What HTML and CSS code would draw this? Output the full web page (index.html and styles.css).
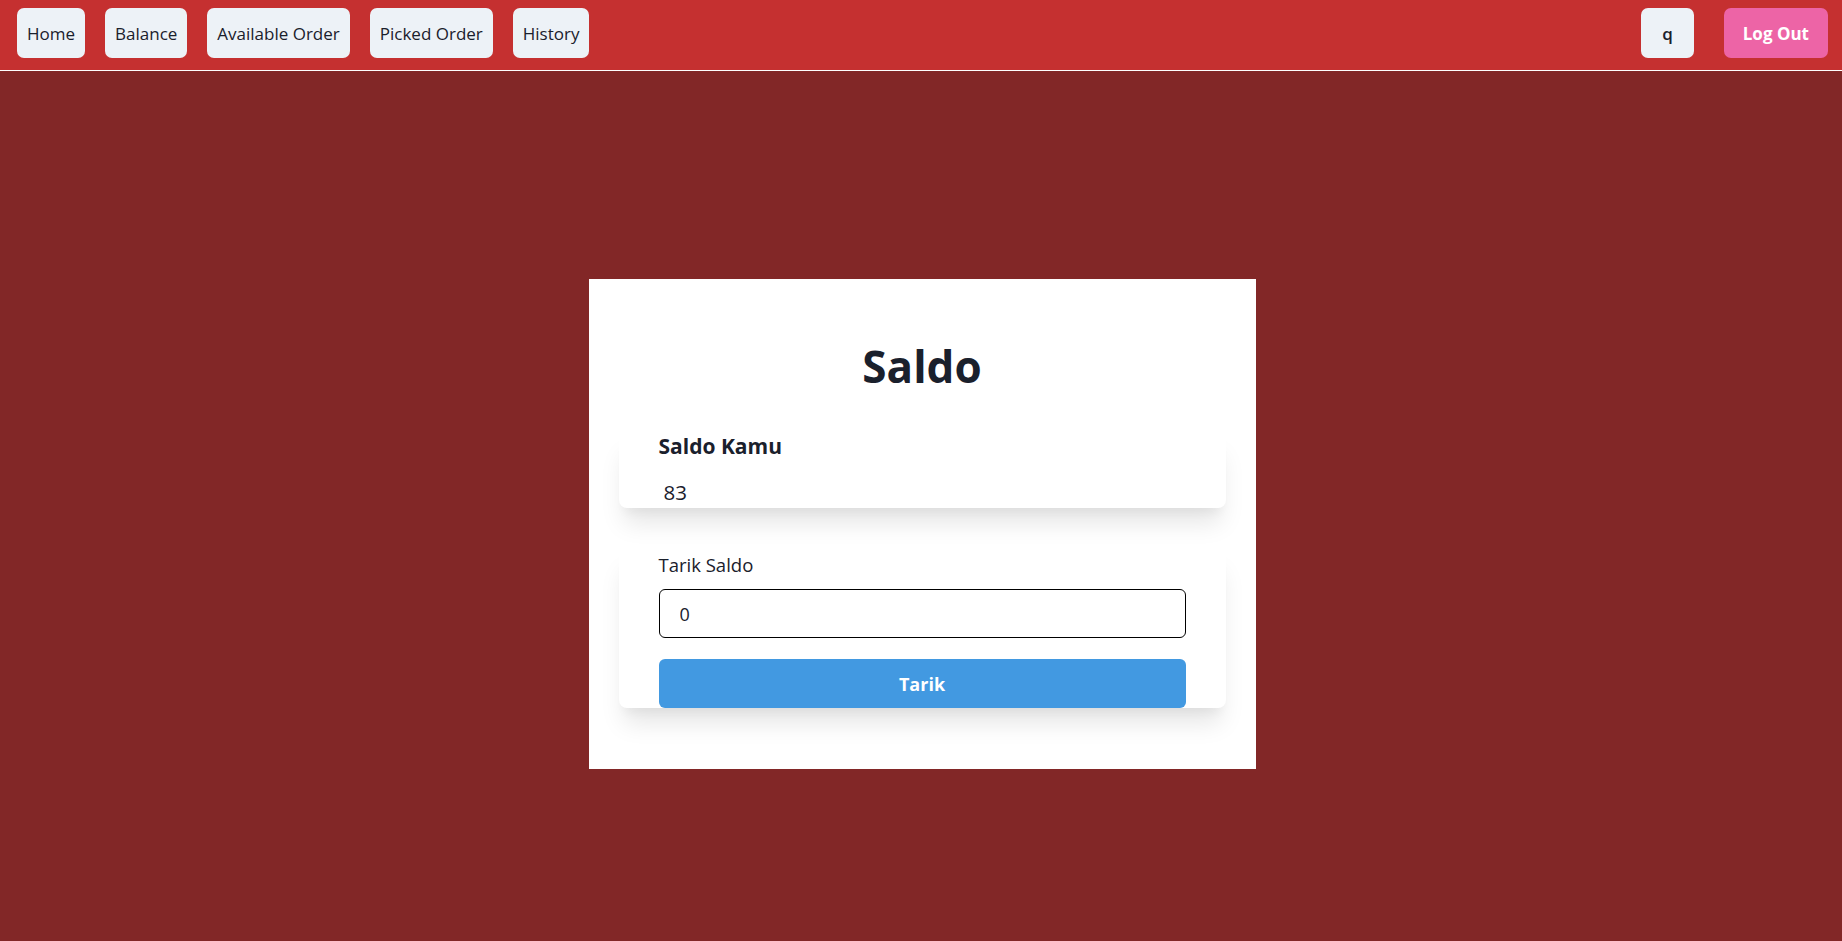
FILE: index.html
```html
<!DOCTYPE html>
<html lang="id">
<head>
<meta charset="utf-8">
<title>Saldo</title>
<link rel="stylesheet" href="styles.css">
</head>
<body>
<nav class="navbar">
  <div class="nav-left">
    <a class="nav-btn" href="#">Home</a>
    <a class="nav-btn" href="#">Balance</a>
    <a class="nav-btn" href="#">Available Order</a>
    <a class="nav-btn" href="#">Picked Order</a>
    <a class="nav-btn" href="#">History</a>
  </div>
  <div class="nav-right">
    <span class="nav-btn user-btn">q</span>
    <a class="logout-btn" href="#">Log Out</a>
  </div>
</nav>
<main class="page">
  <section class="saldo-card">
    <h1 class="title">Saldo</h1>
    <div class="panel balance-panel">
      <h3 class="panel-heading">Saldo Kamu</h3>
      <p class="balance-value">83</p>
    </div>
    <form class="panel withdraw-panel">
      <label class="field-label" for="tarik">Tarik Saldo</label>
      <input class="field-input" id="tarik" type="number" value="0">
      <button class="submit-btn" type="button">Tarik</button>
    </form>
  </section>
</main>
</body>
</html>
```

FILE: styles.css
```css
* {
  box-sizing: border-box;
}

html, body {
  margin: 0;
  padding: 0;
}

body {
  min-height: 941px;
  background: #822727;
  color: #1a202c;
  font-family: "Segoe UI", "Open Sans", "Noto Sans", sans-serif;
}

.navbar {
  height: 71px;
  background: #c53030;
  border-bottom: 1px solid #ffffff;
  display: flex;
  justify-content: space-between;
  align-items: flex-start;
  padding: 8px 14px 0 17px;
}

.nav-left {
  display: flex;
  gap: 20px;
}

.nav-right {
  display: flex;
  gap: 30px;
}

.nav-btn {
  height: 50px;
  display: flex;
  align-items: center;
  justify-content: center;
  padding: 0 10px;
  background: #edf2f7;
  border-radius: 7px;
  color: #1a202c;
  text-decoration: none;
  font-size: 17px;
  font-weight: 500;
}

.user-btn {
  padding: 0 21px;
  font-weight: 600;
}

.logout-btn {
  height: 50px;
  display: flex;
  align-items: center;
  padding: 0 19px;
  background: #ed64a6;
  border-radius: 7px;
  color: #ffffff;
  text-decoration: none;
  font-size: 17px;
  font-weight: 700;
}

.page {
  display: flex;
  justify-content: center;
  padding-top: 208px;
  padding-left: 2px;
}

.saldo-card {
  width: 667px;
  height: 490px;
  background: #ffffff;
  padding: 51px 30px 0;
}

.title {
  margin: 0 0 29px;
  text-align: center;
  font-size: 44px;
  line-height: 72px;
  font-weight: 700;
  color: #1a202c;
}

.panel {
  background: #ffffff;
  border-radius: 8px;
  padding: 0 40px;
  box-shadow: 0 20px 25px -5px rgba(0, 0, 0, 0.1), 0 10px 10px -5px rgba(0, 0, 0, 0.04);
}

.balance-panel {
  height: 77px;
  margin-bottom: 39px;
}

.panel-heading {
  margin: 0;
  font-size: 21px;
  line-height: 30px;
  font-weight: 700;
}

.balance-value {
  margin: 17px 0 0;
  padding-left: 5px;
  font-size: 20.5px;
  line-height: 28px;
}

.withdraw-panel {
  height: 161px;
  display: flex;
  flex-direction: column;
  padding-top: 4px;
  margin: 0;
}

.field-label {
  font-size: 18.5px;
  line-height: 27px;
  margin-bottom: 11px;
}

.field-input {
  height: 49px;
  width: 100%;
  border: 1px solid #000000;
  border-radius: 6px;
  padding: 0 20px;
  font-family: inherit;
  font-size: 18px;
  color: #1a202c;
  margin: 0 0 21px;
  outline: none;
}

.submit-btn {
  height: 49px;
  width: 100%;
  border: none;
  border-radius: 6px;
  background: #4299e1;
  color: #ffffff;
  font-family: inherit;
  font-size: 18px;
  font-weight: 700;
}
```
